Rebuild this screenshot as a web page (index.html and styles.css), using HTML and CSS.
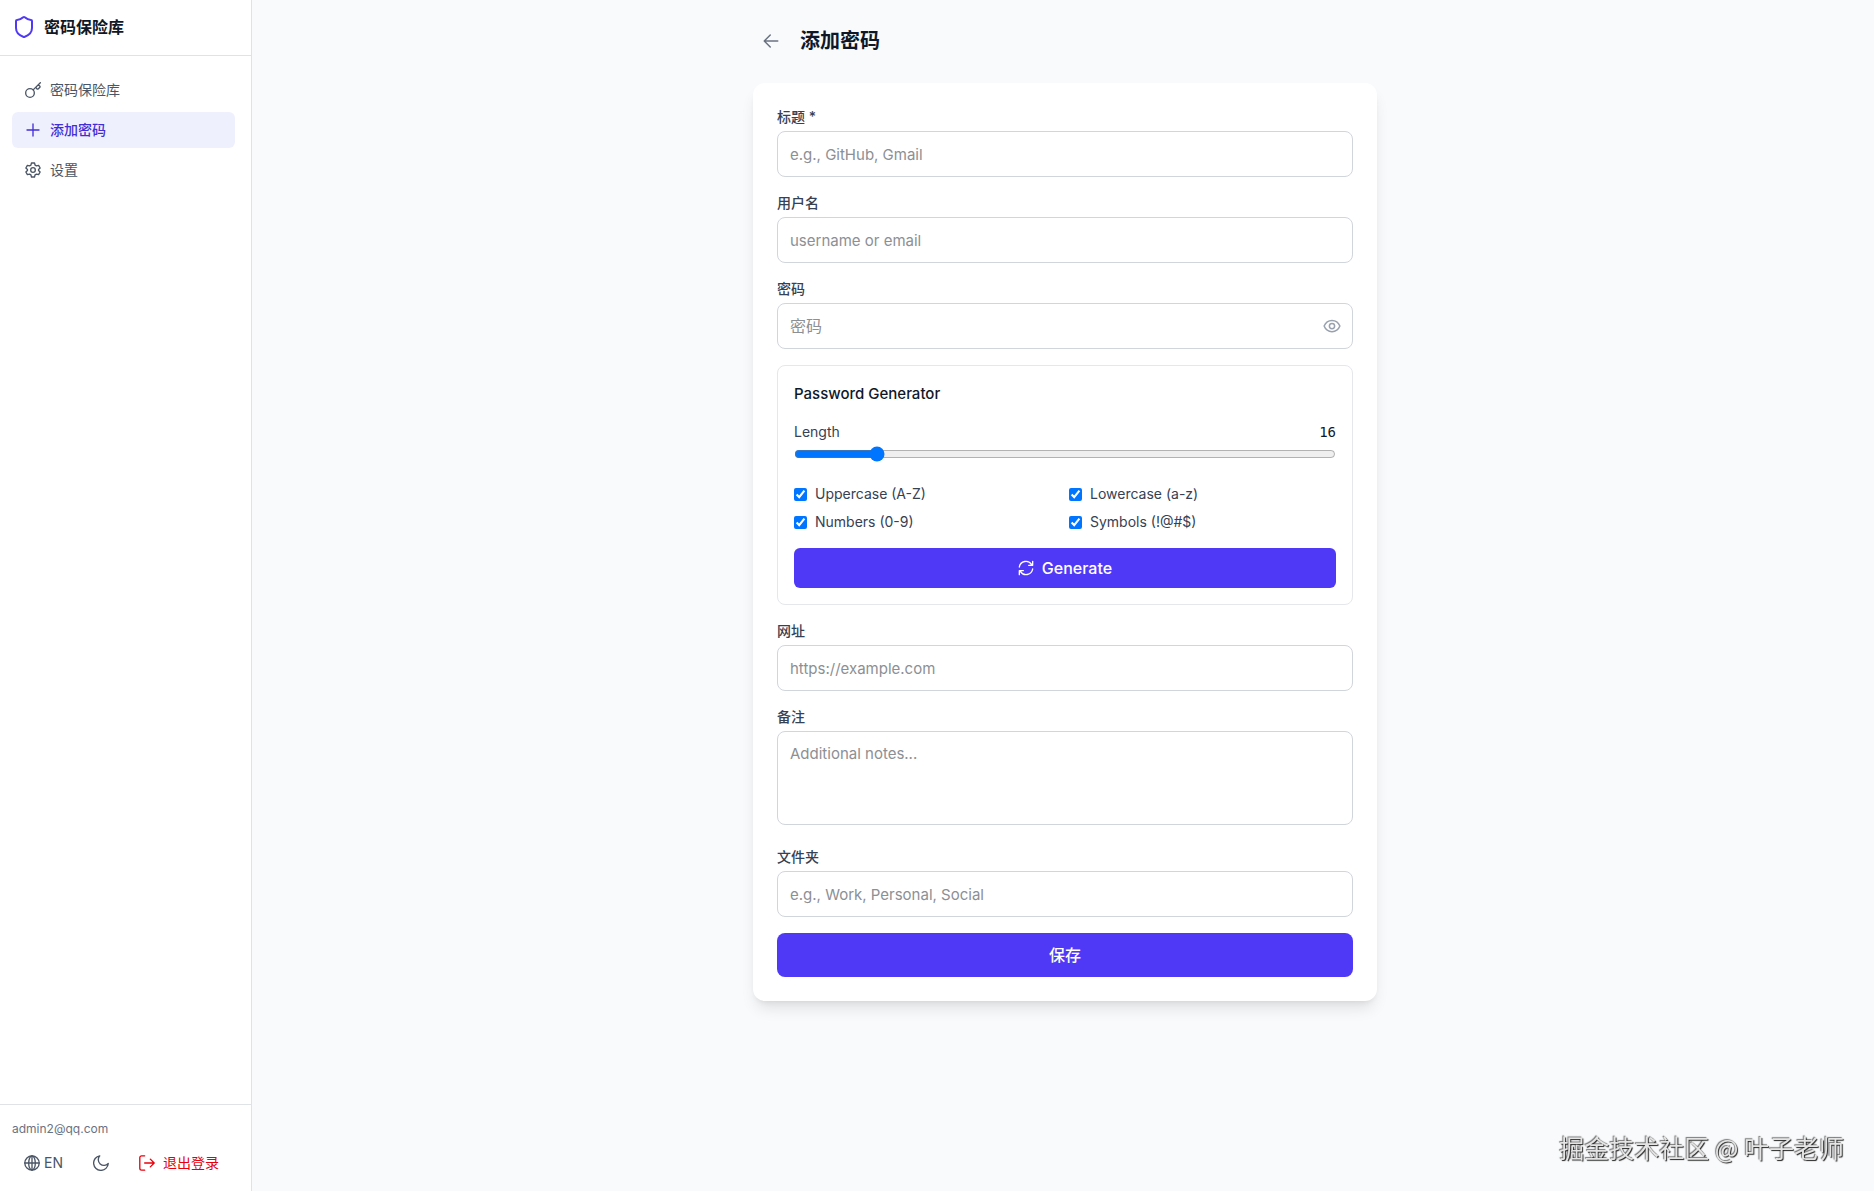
FILE: index.html
```html
<!DOCTYPE html>
<html lang="zh-CN">
<head>
<meta charset="utf-8">
<meta name="viewport" content="width=device-width, initial-scale=1">
<title>添加密码</title>
<link rel="stylesheet" href="styles.css">
</head>
<body>
<div class="app">
  <aside class="sidebar">
    <div class="brand">
      <svg class="icon icon-brand" viewBox="0 0 24 24"><path d="M20 13c0 5-3.500 7.500-7.660 8.950a1 1 0 0 1-.67-.01C7.500 20.500 4 18 4 13V6a1 1 0 0 1 1-1c2 0 4.500-1.200 6.240-2.720a1.170 1.170 0 0 1 1.520 0C14.510 3.810 17 5 19 5a1 1 0 0 1 1 1z"/></svg>
      <span>密码保险库</span>
    </div>
    <nav class="nav">
      <a class="nav-item" href="#vault">
        <svg class="icon" viewBox="0 0 24 24"><circle cx="7.500" cy="16.500" r="6.500"/><path d="M12.200 11.800 23 1M16.200 7.800l1.600 2.400q1 1.200 2.200 0l2-2q1.200-1.200 0-2.200l-2.200-1.800"/></svg>
        密码保险库
      </a>
      <a class="nav-item active" href="#add">
        <svg class="icon" viewBox="0 0 24 24"><path d="M3 12h18M12 3v18"/></svg>
        添加密码
      </a>
      <a class="nav-item" href="#settings">
        <svg class="icon" viewBox="0 0 24 24"><path d="M9.700 1.500h4.600l.8 3.200 2.100 1.200 3.200-.9 2.300 4-2.400 2.300v1.400l2.400 2.300-2.300 4-3.200-.9-2.100 1.200-.8 3.200H9.700l-.8-3.200-2.100-1.200-3.200.9-2.300-4 2.400-2.300v-1.400L1.300 9l2.300-4 3.200.9 2.100-1.200z"/><circle cx="12" cy="12" r="3.500"/></svg>
        设置
      </a>
    </nav>
    <div class="account">
      <div class="email">admin2@qq.com</div>
      <div class="actions">
        <button class="action" type="button">
          <svg class="icon" viewBox="0 0 24 24"><circle cx="12" cy="12" r="10.800"/><ellipse cx="12" cy="12" rx="5" ry="10.800"/><path d="M1.200 12h21.600M12 1.200v21.600"/></svg>
          EN
        </button>
        <button class="action" type="button" aria-label="深色模式">
          <svg class="icon" viewBox="0 0 24 24"><path d="M10.200 1.200A8.300 8.300 0 0 0 22.900 12.800 11 11 0 1 1 10.200 1.200z"/></svg>
        </button>
        <button class="action logout" type="button">
          <svg class="icon" viewBox="0 0 24 24"><path d="M8.500 1.200H4A2.800 2.800 0 0 0 1.200 4v16A2.800 2.800 0 0 0 4 22.800h4.500M8.500 12h14.300M17 6.200l5.800 5.800-5.800 5.800"/></svg>
          退出登录
        </button>
      </div>
    </div>
  </aside>

  <main class="main">
    <div class="page">
      <header class="page-header">
        <button class="back" type="button" aria-label="返回">
          <svg class="icon icon-back" viewBox="0 0 24 24"><path d="M21 12H3.500M11 4l-8 8 8 8"/></svg>
        </button>
        <h1>添加密码</h1>
      </header>

      <form class="card">
        <div class="field">
          <label for="title">标题 *</label>
          <input class="control" id="title" type="text" placeholder="e.g., GitHub, Gmail">
        </div>
        <div class="field">
          <label for="username">用户名</label>
          <input class="control" id="username" type="text" placeholder="username or email">
        </div>
        <div class="field">
          <label for="password">密码</label>
          <div class="password">
            <input class="control" id="password" type="password" placeholder="密码">
            <button class="reveal" type="button" aria-label="显示密码">
              <svg class="icon icon-eye" viewBox="0 0 24 24"><path d="M1.500 12C3.500 7 7.500 4.500 12 4.500S20.500 7 22.500 12c-2 5-6 7.500-10.500 7.500S3.500 17 1.500 12z"/><circle cx="12" cy="12" r="3.500"/></svg>
            </button>
          </div>
        </div>

        <section class="generator">
          <h2>Password Generator</h2>
          <div>
            <div class="length">
              <label for="length">Length</label>
              <output for="length">16</output>
            </div>
            <input class="slider" id="length" type="range" min="8" max="64" value="16">
          </div>
          <div class="options">
            <label><input type="checkbox" checked>Uppercase (A-Z)</label>
            <label><input type="checkbox" checked>Lowercase (a-z)</label>
            <label><input type="checkbox" checked>Numbers (0-9)</label>
            <label><input type="checkbox" checked>Symbols (!@#$)</label>
          </div>
          <button class="generate" type="button">
            <svg class="icon" viewBox="0 0 24 24"><path d="M2 10.500A10 10 0 0 1 20.500 7M22 2v6h-6M22 13.500A10 10 0 0 1 3.500 17M2 22v-6h6"/></svg>
            Generate
          </button>
        </section>

        <div class="field">
          <label for="url">网址</label>
          <input class="control" id="url" type="url" placeholder="https://example.com">
        </div>
        <div class="field field-notes">
          <label for="notes">备注</label>
          <textarea class="control" id="notes" rows="3" placeholder="Additional notes..."></textarea>
        </div>
        <div class="field">
          <label for="folder">文件夹</label>
          <input class="control" id="folder" type="text" placeholder="e.g., Work, Personal, Social">
        </div>
        <button class="save" type="submit">保存</button>
      </form>
    </div>
  </main>
</div>
<div class="watermark">掘金技术社区 @ 叶子老师</div>
</body>
</html>
```
FILE: styles.css
```css
*, *::before, *::after { box-sizing: border-box; }

body {
  margin: 0;
  font-family: Inter, "Noto Sans CJK SC", sans-serif;
  font-size: 16px;
  line-height: 24px;
  color: #101828;
  background: #f9fafc;
}

h1, h2 { margin: 0; }

button, input, textarea { font: inherit; color: inherit; }

button {
  padding: 0;
  border: 0;
  background: none;
  cursor: pointer;
}

.icon {
  flex: none;
  width: 16px;
  height: 16px;
  fill: none;
  stroke: currentColor;
  stroke-width: 2;
  stroke-linecap: round;
  stroke-linejoin: round;
}

.app {
  display: flex;
  min-height: 100vh;
}

.sidebar {
  display: flex;
  flex: none;
  flex-direction: column;
  width: 252px;
  border-right: 1px solid #dfe2e7;
  background: #fff;
}

.brand {
  display: flex;
  align-items: center;
  gap: 8px;
  height: 56px;
  padding: 0 12px 2px;
  border-bottom: 1px solid #dfe2e7;
  font-weight: 600;
}

.icon-brand {
  width: 24px;
  height: 24px;
  color: #4f39f6;
}

.nav {
  display: flex;
  flex: 1;
  flex-direction: column;
  gap: 4px;
  padding: 16px 16px 16px 12px;
}

.nav-item {
  display: flex;
  align-items: center;
  gap: 9px;
  padding: 8px 13px;
  border-radius: 6px;
  font-size: 14px;
  line-height: 20px;
  color: #4a5565;
  text-decoration: none;
}

.nav-item.active {
  background: #eff0fe;
  color: #432dd7;
  font-weight: 500;
}

.account {
  padding: 12px 12px 14px;
  border-top: 1px solid #dfe2e7;
}

.email {
  margin-bottom: 8px;
  font-size: 12px;
  line-height: 24px;
  color: #6a7282;
}

.actions {
  display: flex;
  gap: 6px;
}

.action {
  display: flex;
  align-items: center;
  gap: 4px;
  padding: 4px 12px;
  font-size: 14px;
  line-height: 20px;
  color: #4a5565;
  white-space: nowrap;
}

.action.logout {
  gap: 8px;
  color: #e7000b;
}

.main {
  flex: 1;
  padding: 23px 24px 24px 28px;
}

.page {
  max-width: 624px;
  margin: 0 auto;
}

.page-header {
  display: flex;
  align-items: center;
  gap: 11px;
  margin-bottom: 24px;
}

.page-header h1 {
  font-size: 20px;
  line-height: 28px;
  font-weight: 600;
}

.back {
  display: flex;
  padding: 9px;
  color: #6a7282;
}

.icon-back, .icon-eye {
  width: 18px;
  height: 18px;
}

.card {
  display: flex;
  flex-direction: column;
  gap: 16px;
  padding: 24px;
  border-radius: 12px;
  background: #fff;
  box-shadow: 0 10px 15px -3px rgb(0 0 0 / 10%), 0 4px 6px -4px rgb(0 0 0 / 10%);
}

.field {
  display: flex;
  flex-direction: column;
  gap: 4px;
}

.field-notes { margin-bottom: 6px; }

.field label {
  font-size: 14px;
  line-height: 20px;
  font-weight: 500;
  color: #364153;
}

.control {
  display: block;
  width: 100%;
  padding: 10px 12px;
  border: 1px solid #d1d5dc;
  border-radius: 8px;
  background: #fff;
  font-size: 15px;
  line-height: 24px;
}

input.control { height: 46px; }

textarea.control { resize: none; }

.control::placeholder { color: #8c8f94; }

.password { position: relative; }

.password .control { font-size: 16px; }

.reveal {
  position: absolute;
  top: 0;
  right: 12px;
  bottom: 0;
  display: flex;
  align-items: center;
  color: #99a1af;
}

.generator {
  display: flex;
  flex-direction: column;
  gap: 16px;
  padding: 16px;
  border: 1px solid #e5e7eb;
  border-radius: 8px;
}

.generator h2 {
  font-size: 15px;
  line-height: 24px;
  font-weight: 500;
}

.length {
  display: flex;
  justify-content: space-between;
  margin-bottom: 4px;
  font-size: 14px;
  line-height: 20px;
  color: #364153;
}

.length output {
  font-family: "DejaVu Sans Mono", monospace;
  color: #101828;
}

.slider {
  display: block;
  width: 100%;
  height: 16px;
  margin: 0 0 6px;
}

.options {
  display: grid;
  grid-template-columns: 1fr 1fr;
  gap: 8px;
}

.options label {
  display: flex;
  align-items: center;
  gap: 8px;
  font-size: 14px;
  line-height: 20px;
  color: #364153;
}

.options input { margin: 0; }

.generate, .save {
  display: flex;
  align-items: center;
  justify-content: center;
  gap: 8px;
  background: #4f39f6;
  color: #fff;
  font-weight: 500;
}

.generate {
  padding: 8px;
  border-radius: 6px;
}

.save {
  padding: 10px;
  border-radius: 8px;
}

.watermark {
  position: fixed;
  right: 30px;
  bottom: 26px;
  font-family: "Noto Sans CJK SC", sans-serif;
  font-size: 25px;
  line-height: 36px;
  color: #e4e4e4;
  text-shadow: 1px 1px 1px #222, -1px -1px 1px #777;
}
```
